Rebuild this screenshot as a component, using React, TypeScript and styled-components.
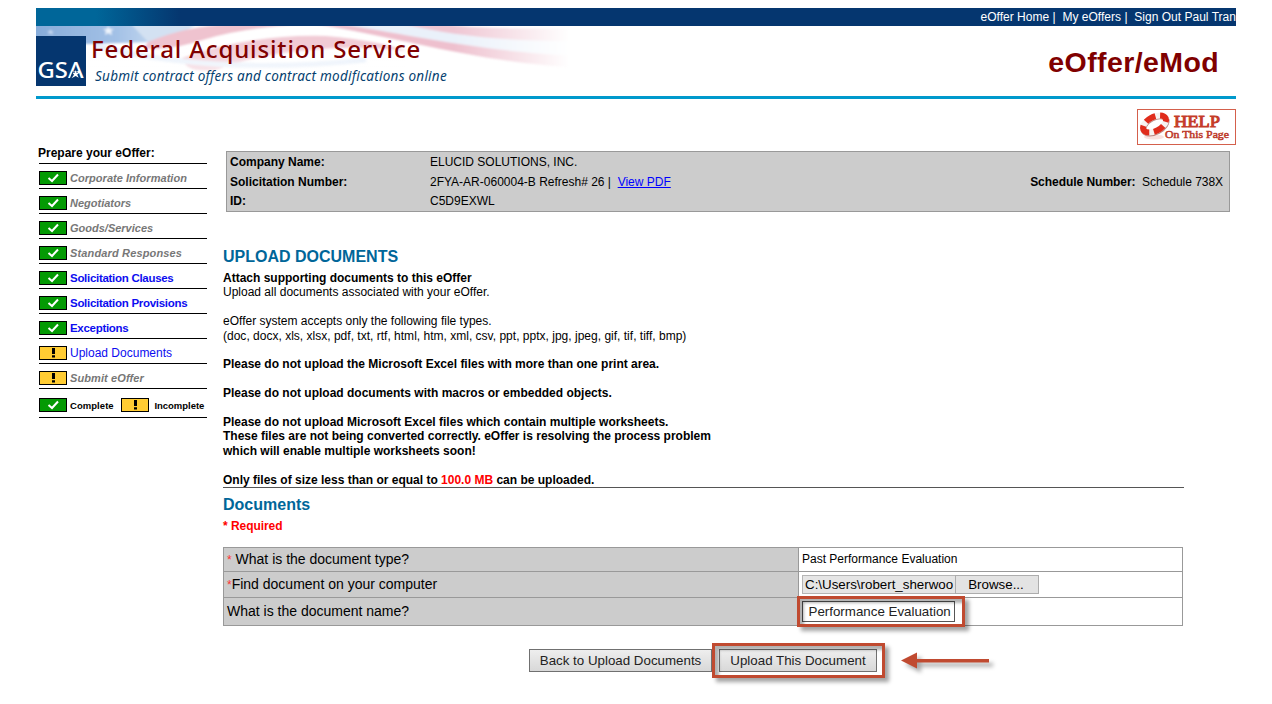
import React from "react";
import styled, { createGlobalStyle } from "styled-components";

const Global = createGlobalStyle`
  * { box-sizing: border-box; }
  body { margin: 0; background: #fff; color: #000; font-family: "Liberation Sans", Arial, sans-serif; font-size: 12px; }
`;

const Page = styled.div`
  width: 1272px; height: 704px; overflow: hidden; padding: 8px 36px 0;
`;
const T = styled.span<{ $ls?: number }>`
  letter-spacing: ${p => p.$ls ?? 0}px; white-space: pre;
`;
const TopBar = styled.nav`
  height: 18px; display: flex; justify-content: flex-end; overflow: hidden;
  background: linear-gradient(90deg, #006699 0, #006699 60px, #05366f 145px);
  color: #fff; line-height: 18px; white-space: pre;
`;
const Banner = styled.header`
  height: 73px; display: flex; justify-content: space-between; position: relative;
  border-bottom: 3px solid #0099cc;
`;
const Flag = styled.svg` position: absolute; left: 0; top: 0; z-index: -1; `;
const Brand = styled.div` display: flex; padding-top: 10px; `;
const Titles = styled.div` display: flex; flex-direction: column; padding-left: 5px; `;
const Title = styled.div`
  font: 500 24px/26px "Noto Sans", sans-serif; color: #800000; white-space: pre;
`;
const Tagline = styled.div`
  font: italic 400 13.5px/18px "Noto Sans", sans-serif; color: #063f70; white-space: pre; padding: 5px 0 0 4px;
`;
const AppName = styled.div`
  font-weight: bold; font-size: 28.5px; line-height: 34px; color: #800000; padding: 19px 17px 0 0;
`;
const HelpRow = styled.div` display: flex; justify-content: flex-end; height: 52px; padding-top: 10px; `;
const Columns = styled.div` display: flex; align-items: flex-start; `;

const Side = styled.aside` width: 168px; margin: -6px 0 0 3px; flex: none; `;
const SideTitle = styled.div`
  height: 19px; font-weight: bold; line-height: 17px; border-bottom: 1px solid #000; text-indent: -1px;
`;
const SideItem = styled.div<{ $kind: "done" | "link" | "open" | "legend" }>`
  height: ${p => (p.$kind === "legend" ? 29 : 25)}px;
  padding-top: ${p => (p.$kind === "legend" ? 4 : 3)}px;
  display: flex; align-items: center; gap: 3px; border-bottom: 1px solid #000; white-space: pre;
  font-size: ${p => ({ done: 11, legend: 9.5, link: 11.5, open: 12 })[p.$kind]}px;
  font-style: ${p => (p.$kind === "done" ? "italic" : "normal")};
  font-weight: ${p => (p.$kind === "open" ? 400 : 700)};
  color: ${p => (p.$kind === "done" ? "#777" : p.$kind === "legend" ? "#000" : "#0c0cf0")};
`;
const Spread = styled.span` flex: 1; `;
const BadgeBox = styled.span<{ $ok: boolean }>`
  width: 28px; height: 14px; border: 1px solid #000; flex: none; display: flex;
  justify-content: center; background: ${p => (p.$ok ? "#049a04" : "#ffcc33")};
`;

const Main = styled.main` padding: 0 0 0 16px; width: 1029px; `;
const Info = styled.dl`
  margin: 0 0 0 3px; width: 1004px; height: 61px; background: #ccc; border: 1px solid #999; padding: 0 6px 1px 3px;
  display: grid; grid-template-columns: 200px 1fr auto; grid-template-rows: 19px 21px 18px; align-items: center; white-space: pre;
`;
const Dt = styled.dt` font-weight: bold; `;
const Dd = styled.dd<{ $span?: boolean }>` margin: 0; grid-column: ${p => (p.$span ? "2 / 4" : "auto")}; `;
const Link = styled.a` color: #0000ff; text-decoration: underline; `;
const Heading = styled.h1` margin: 35px 0 0; font-size: 16px; line-height: 20px; color: #006699; `;
const Line = styled.p<{ $b?: boolean }>`
  margin: 0; height: 14.42px; line-height: 14.42px; font-weight: ${p => (p.$b ? 700 : 400)}; white-space: pre;
`;
const Copy = styled.section` padding-top: 4px; height: 221px; width: 961px; border-bottom: 1px solid #555; `;
const Red = styled.span` color: #f00; `;
const Star = styled.span` color: #f33; font-size: 12px; `;
const SubHeading = styled.h2` margin: 7px 0 0; font-size: 16px; line-height: 20px; color: #006699; `;
const Required = styled.div` color: #f00; font-weight: bold; line-height: 16px; margin-top: 3px; `;
const Form = styled.div`
  margin-top: 13px; width: 960px; display: grid; grid-template-columns: 574px 383px; grid-template-rows: 23px 25px 27px;
  gap: 1px; padding: 1px; background: #999;
`;
const Question = styled.div`
  background: #ccc; padding: 0 0 2px 3px; display: flex; align-items: center; font-size: 14px; white-space: pre;
`;
const Answer = styled.div`
  background: #fff; padding-left: 3px; display: flex; align-items: center; white-space: pre; position: relative;
`;
const PlainAnswer = styled(Answer)` padding-bottom: 1px; `;
const FilePath = styled.div`
  width: 153px; height: 19px; background: #e5e5e5; border: 1px solid #b5b5b5; border-right: 0; padding-left: 2px;
  font-size: 13.33px; line-height: 17px; overflow: hidden;
`;
const Browse = styled.button`
  width: 84px; height: 19px; padding: 0 2px 0 0; background: #e3e3e3; border: 1px solid #adadad; font: 13.33px "Liberation Sans", sans-serif; line-height: 17px;
`;
const NameField = styled.div`
  width: 153px; height: 21px; border: 1px solid #555; font-size: 13.33px; line-height: 19px; padding-left: 5.5px; background: #fff; color: #222;
`;
const Mark = styled.div<{ $x: number; $y: number; $w: number; $h: number }>`
  position: absolute; left: ${p => p.$x}px; top: ${p => p.$y}px; width: ${p => p.$w}px; height: ${p => p.$h}px;
  border: 3px solid #c04a30; box-shadow: 4px 4px 4px rgba(0,0,0,.36), inset 4px 4px 3px rgba(0,0,0,.3); z-index: 1;
`;
const Actions = styled.div` display: flex; gap: 7px; margin: 23px 0 0 306px; `;
const Holder = styled.div` position: relative; display: flex; `;
const Button = styled.button<{ $w: number }>`
  width: ${p => p.$w}px; height: 23px; padding: 0; border: 1px solid #707070; background: linear-gradient(#eeeeee, #d8d8d8);
  color: #222; font: 13.33px "Liberation Sans", sans-serif; white-space: pre;
`;
const Arrow = styled.svg` margin: 2px 0 0 17px; overflow: visible; filter: drop-shadow(4px 4px 2px rgba(0,0,0,.35)); `;

function Badge({ ok }: { ok: boolean }) {
  return (
    <BadgeBox $ok={ok}>
      <svg width="26" height="12" viewBox="0 0 26 12">
        {ok
          ? <path d="M8.5 6 L12 9 L18 2.5" fill="none" stroke="#fff" strokeWidth="2" />
          : <path d="M12 1h3v6h-3zM12 8.3h3v2.2h-3z" fill="#000" />}
      </svg>
    </BadgeBox>
  );
}

const steps: { label: string; kind: "done" | "link" | "open"; ok: boolean; ls: number }[] = [
  { label: "Corporate Information", kind: "done", ok: true, ls: 0.04 },
  { label: "Negotiators", kind: "done", ok: true, ls: 0 },
  { label: "Goods/Services", kind: "done", ok: true, ls: 0 },
  { label: "Standard Responses", kind: "done", ok: true, ls: 0.15 },
  { label: "Solicitation Clauses", kind: "link", ok: true, ls: -0.29 },
  { label: "Solicitation Provisions", kind: "link", ok: true, ls: -0.29 },
  { label: "Exceptions", kind: "link", ok: true, ls: -0.3 },
  { label: "Upload Documents", kind: "open", ok: false, ls: 0 },
  { label: "Submit eOffer", kind: "done", ok: false, ls: 0.1 },
];

function FlagArt() {
  return (
    <Flag width="580" height="66" viewBox="0 0 580 66">
      <defs>
        <linearGradient id="fade" x1="0" x2="1"><stop offset="0" stopColor="#fff" /><stop offset=".72" stopColor="#fff" /><stop offset=".92" stopColor="#fff" stopOpacity="0" /></linearGradient>
        <linearGradient id="down" x1="0" x2="0" y1="0" y2="1"><stop offset=".3" stopColor="#fff" stopOpacity="0" /><stop offset=".75" stopColor="#fff" /></linearGradient>
        <linearGradient id="blue" x1="0" x2="1"><stop offset="0" stopColor="#86abd9" /><stop offset=".6" stopColor="#a3c1e6" /><stop offset="1" stopColor="#d0e0f2" /></linearGradient>
        <mask id="m"><rect width="580" height="66" fill="url(#fade)" /></mask>
        <filter id="soft"><feGaussianBlur stdDeviation=".8" /></filter>
      </defs>
      <g mask="url(#m)"><g filter="url(#soft)">
        <path d="M50 -3H270C350 8 430 32 560 40V12C480 4 420 8 370 -3H50Z" fill="#eaf1fa" />
        <path d="M-3 -3H92L136 9L118 16L50 18L-3 13Z" fill="url(#blue)" />
        <path d="M95 -2L160 -1L140 10L112 16Z" fill="#d3e1f2" />
        <path d="M112 16Q150 0 195 -2H268Q205 2 170 13Q130 26 108 22Z" fill="#efc3cf" />
        <path d="M146 32Q215 8 290 10Q345 15 370 25Q320 19 275 24Q220 28 180 44Q150 48 146 32Z" fill="#f1cbd5" />
        <path d="M280 -2H305C390 12 450 26 545 30V42C440 36 375 14 280 -2Z" fill="#eec0ce" />
        <path d="M368 -2H405Q450 4 545 2V15Q440 16 368 -2Z" fill="#efc6d3" />
        <path d="M60 20Q180 50 330 34" fill="none" stroke="#e8f0fa" strokeWidth="5" />
        <path d="M72 0l2 3h4l-3 2 1 4-4-2-3 2 1-4-3-2h4z" fill="#eef4fc" />
        <path d="M14 3l1 2h3l-2 1 1 3-3-2-2 2 1-3-2-1h3z" fill="#c8daf2" />
      </g><rect x="50" width="320" height="66" fill="url(#down)" opacity=".6" /></g>
    </Flag>
  );
}

function Help() {
  return (
    <svg width="99" height="36" viewBox="0 0 99 36">
      <rect x=".5" y=".5" width="98" height="35" fill="#fff" stroke="#d4604c" />
      <ellipse cx="17" cy="28" rx="10" ry="2.5" fill="#f8e2df" />
      <g transform="rotate(-28 17.5 15)" fill="none">
        <ellipse cx="17.5" cy="16" rx="12.5" ry="7" stroke="#b98a84" strokeWidth="6" />
        <ellipse cx="17.5" cy="15" rx="12.5" ry="7" stroke="#f6f2f1" strokeWidth="6" />
        <ellipse cx="17.5" cy="15" rx="12.5" ry="7" stroke="#e02c1c" strokeWidth="6" strokeDasharray="11 4.7" strokeDashoffset="7" />
      </g>
      <text x="37" y="17.5" fontFamily="Liberation Serif, serif" fontWeight="400" fontSize="17" fill="#c53c29" stroke="#c53c29" strokeWidth="1" textLength="46" lengthAdjust="spacingAndGlyphs">HELP</text>
      <text x="28" y="29" fontFamily="Liberation Serif, serif" fontWeight="400" fontSize="11" fill="#bd3827" stroke="#bd3827" strokeWidth=".5" textLength="64" lengthAdjust="spacingAndGlyphs">On This Page</text>
    </svg>
  );
}

export default function App() {
  return (
    <Page>
      <Global />
      <TopBar><T $ls={0.02}>eOffer Home |  My eOffers |  Sign Out Paul Tran</T></TopBar>
      <Banner>
        <FlagArt />
        <Brand>
          <svg width="50" height="50" viewBox="0 0 50 50">
            <rect width="50" height="50" fill="#05366f" />
            <text x="1.5" y="41.7" fontFamily="Noto Sans, sans-serif" fontWeight="500" fontSize="22.5" fill="#fff" textLength="46" lengthAdjust="spacingAndGlyphs">GSA</text>
            <path d="M36.5 35.5h5l1.5 6.500h-9z" fill="#05366f" />
            <path d="M39.5 34l1 2.700h3l-2.300 1.700 1.500 3.300-3-1.800-4.200 2.300 2.500-3.500-1.500-2h2.200z" fill="#fff" />
          </svg>
          <Titles>
            <Title><T $ls={0.87}>Federal Acquisition Service</T></Title>
            <Tagline><T $ls={0.25}>Submit contract offers and contract modifications online</T></Tagline>
          </Titles>
        </Brand>
        <AppName><T $ls={0.4}>eOffer/eMod</T></AppName>
      </Banner>
      <HelpRow><Help /></HelpRow>
      <Columns>
        <Side>
          <SideTitle><T>Prepare your eOffer:</T></SideTitle>
          {steps.map(s => (
            <SideItem key={s.label} $kind={s.kind}><Badge ok={s.ok} /><T $ls={s.ls}>{s.label}</T></SideItem>
          ))}
          <SideItem $kind="legend">
            <Badge ok /><T $ls={0.05}>Complete</T><Spread /><Badge ok={false} /><T $ls={-0.02}> Incomplete </T>
          </SideItem>
        </Side>
        <Main>
          <Info>
            <Dt><T>Company Name:</T></Dt><Dd $span><T>ELUCID SOLUTIONS, INC.</T></Dd>
            <Dt><T>Solicitation Number:</T></Dt>
            <Dd><T>2FYA-AR-060004-B Refresh# 26 |  </T><Link><T>View PDF</T></Link></Dd>
            <Dd><T $ls={-0.04}><b>Schedule Number:</b>  Schedule 738X</T></Dd>
            <Dt><T>ID:</T></Dt><Dd $span><T>C5D9EXWL</T></Dd>
          </Info>
          <Heading><T>UPLOAD DOCUMENTS</T></Heading>
          <Copy>
            <Line $b><T>Attach supporting documents to this eOffer</T></Line>
            <Line><T>Upload all documents associated with your eOffer.</T></Line>
            <Line />
            <Line><T>eOffer system accepts only the following file types.</T></Line>
            <Line><T $ls={0.01}>(doc, docx, xls, xlsx, pdf, txt, rtf, html, htm, xml, csv, ppt, pptx, jpg, jpeg, gif, tif, tiff, bmp)</T></Line>
            <Line />
            <Line $b><T>Please do not upload the Microsoft Excel files with more than one print area.</T></Line>
            <Line />
            <Line $b><T>Please do not upload documents with macros or embedded objects.</T></Line>
            <Line />
            <Line $b><T>Please do not upload Microsoft Excel files which contain multiple worksheets.</T></Line>
            <Line $b><T>These files are not being converted correctly. eOffer is resolving the process problem</T></Line>
            <Line $b><T>which will enable multiple worksheets soon!</T></Line>
            <Line />
            <Line $b><T>Only files of size less than or equal to <Red>100.0 MB</Red> can be uploaded.</T></Line>
          </Copy>
          <SubHeading><T>Documents</T></SubHeading>
          <Required><T $ls={-0.05}>* Required</T></Required>
          <Form>
            <Question><T><Star>*</Star> What is the document type?</T></Question>
            <PlainAnswer><T>Past Performance Evaluation</T></PlainAnswer>
            <Question><T><Star>*</Star>Find document on your computer</T></Question>
            <Answer><FilePath><T>C:\Users\robert_sherwoo</T></FilePath><Browse><T>Browse...</T></Browse></Answer>
            <Question><T>What is the document name?</T></Question>
            <Answer>
              <NameField><T>Performance Evaluation</T></NameField>
              <Mark $x={-2} $y={-2} $w={168} $h={31} />
            </Answer>
          </Form>
          <Actions>
            <Button $w={183}><T>Back to Upload Documents</T></Button>
            <Holder>
              <Button $w={158}><T>Upload This Document</T></Button>
              <Mark $x={-7} $y={-6} $w={173} $h={35} />
            </Holder>
            <Arrow width="90" height="18"><path d="M0 9.5L16 1.5V8H88V11.5H16V17.5Z" fill="#c04a30" /></Arrow>
          </Actions>
        </Main>
      </Columns>
    </Page>
  );
}
